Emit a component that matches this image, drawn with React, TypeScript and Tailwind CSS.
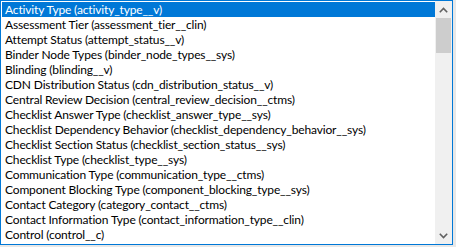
import React from 'react';

const items = [
    'Activity Type (activity_type__v)',
    'Assessment Tier (assessment_tier__clin)',
    'Attempt Status (attempt_status__v)',
    'Binder Node Types (binder_node_types__sys)',
    'Blinding (blinding__v)',
    'CDN Distribution Status (cdn_distribution_status__v)',
    'Central Review Decision (central_review_decision__ctms)',
    'Checklist Answer Type (checklist_answer_type__sys)',
    'Checklist Dependency Behavior (checklist_dependency_behavior__sys)',
    'Checklist Section Status (checklist_section_status__sys)',
    'Checklist Type (checklist_type__sys)',
    'Communication Type (communication_type__ctms)',
    'Component Blocking Type (component_blocking_type__sys)',
    'Contact Category (category_contact__ctms)',
    'Contact Information Type (contact_information_type__clin)',
    'Control (control__c)',
];

export default function App() {
    return (
        <div className="w-[456px] h-[247px] bg-[#e8e8e8] overflow-hidden">
            <div className="w-[453px] h-[245px] flex bg-white border border-[#0078d7] font-['Lato',sans-serif] text-[12px] tracking-[-0.15px] text-black">
                {/* List */}
                <div className="flex-1 pt-px pl-px">
                    {items.map((item, idx) => (
                        <div
                            key={idx}
                            className={
                                idx === 0
                                    ? 'h-[15px] leading-[16px] pl-[3px] whitespace-nowrap bg-[#0078d7] text-white'
                                    : 'h-[15px] leading-[16px] pl-[3px] whitespace-nowrap'
                            }
                        >
                            {item}
                        </div>
                    ))}
                </div>

                {/* Scrollbar */}
                <div className="w-[17px] bg-[#f0f0f0] flex flex-col items-center">
                    <div className="h-[17px] w-full flex items-center justify-center">
                        <svg width="9" height="6" viewBox="0 0 9 6" fill="none">
                            <path d="M0.8 5.2 L4.5 1.5 L8.2 5.2" stroke="#606060" strokeWidth="1.6" />
                        </svg>
                    </div>
                    <div className="w-[15px] h-[35px] bg-[#cdcdcd]"></div>
                    <div className="flex-1"></div>
                    <div className="h-[17px] w-full flex items-center justify-center">
                        <svg width="9" height="6" viewBox="0 0 9 6" fill="none">
                            <path d="M0.8 0.8 L4.5 4.5 L8.2 0.8" stroke="#606060" strokeWidth="1.6" />
                        </svg>
                    </div>
                </div>
            </div>
        </div>
    );
}
